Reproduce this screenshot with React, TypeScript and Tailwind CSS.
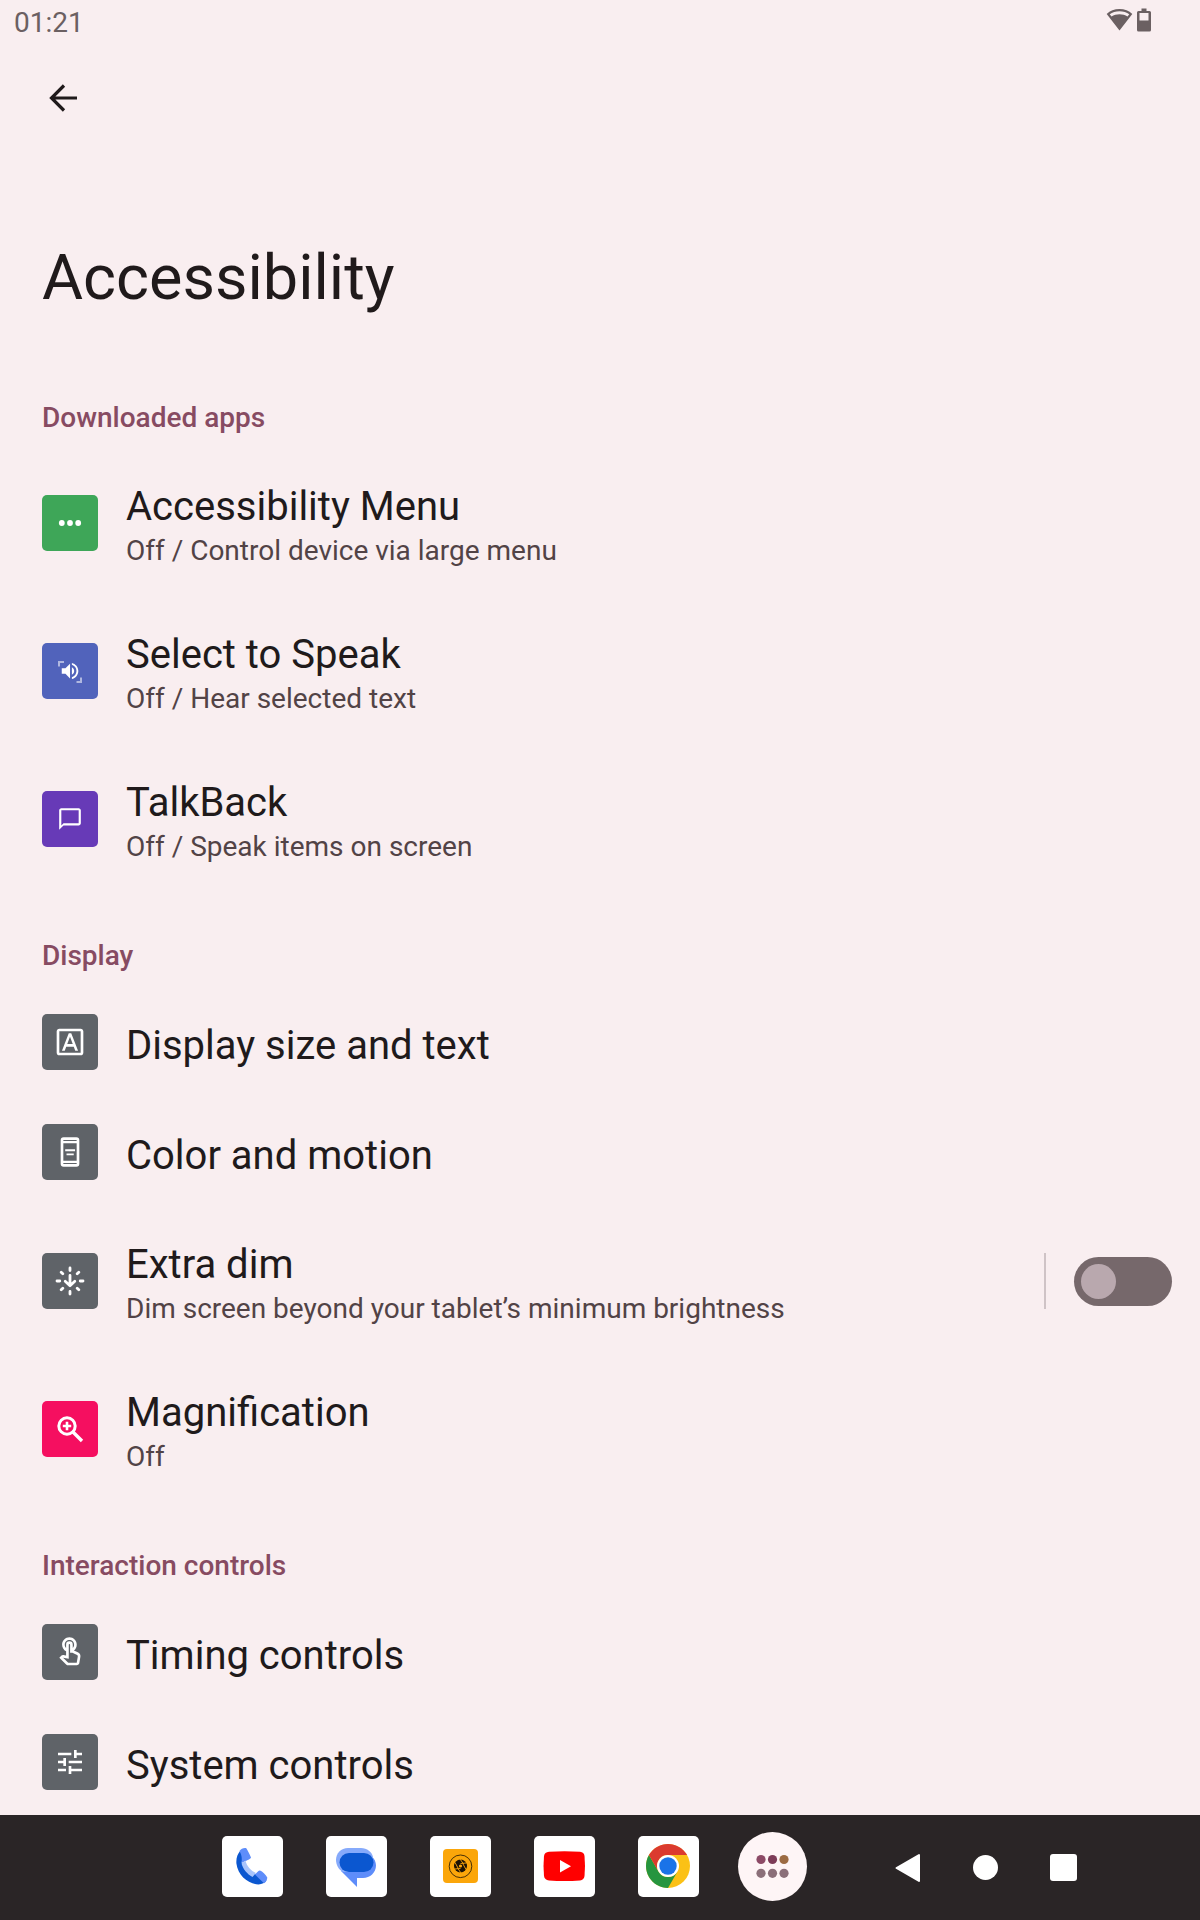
import { useState, type ReactNode } from "react";
import { MdChatBubbleOutline, MdOutlineFontDownload, MdOutlineTouchApp, MdTune } from "react-icons/md";

function DotsIcon() {
  return (
    <svg viewBox="0 0 32 32" className="size-8" fill="currentColor" aria-hidden="true">
      <circle cx="7.8" cy="16" r="2.9" />
      <circle cx="16" cy="16" r="2.9" />
      <circle cx="24.2" cy="16" r="2.9" />
    </svg>
  );
}

function SpeakIcon() {
  return (
    <svg viewBox="0 0 32 32" className="size-8" fill="currentColor" aria-hidden="true">
      <path d="M4 11.5V6h6v2H6v3.500zM28 22.5v5.500h-5.500v-2h3.500v-3.500z" opacity=".55" />
      <path
        transform="translate(5 5) scale(.92)"
        d="M3 9v6h4l5 5V4L7 9H3zm13.5 3c0-1.77-1.02-3.29-2.5-4.03v8.05c1.48-.73 2.5-2.25 2.5-4.02zM14 3.23v2.06c2.89.86 5 3.54 5 6.71s-2.11 5.85-5 6.71v2.06c4.01-.91 7-4.49 7-8.77s-2.99-7.86-7-8.77z"
      />
    </svg>
  );
}

function PhoneLinesIcon() {
  return (
    <svg viewBox="0 0 24 24" className="size-8" fill="none" stroke="currentColor" strokeWidth="2" aria-hidden="true">
      <rect x="6" y="2" width="12" height="20" rx="1.2" />
      <path d="M6 4.6h12M6 19.4h12" strokeWidth="1.8" />
      <path d="M8.4 10.7h7.400M9.4 13.8h5.400" strokeWidth="1.4" />
    </svg>
  );
}

function ExtraDimIcon() {
  return (
    <svg viewBox="0 0 32 32" className="size-8" fill="none" stroke="currentColor" strokeWidth="2.8" strokeLinecap="round" aria-hidden="true">
      <path d="M16 3v2.6M16 26.4V29M3 16h2.8M26.2 16H29M7.2 7.2l1.6 1.6M23.2 23.2l1.6 1.6M24.8 7.2l-1.6 1.6M8.8 23.2l-1.6 1.6" />
      <path d="M16 10.5v9M11.2 16.2l4.8 4.6 4.8-4.6" strokeLinejoin="round" />
    </svg>
  );
}

function MagnifyIcon() {
  return (
    <svg viewBox="0 0 32 32" className="size-8" fill="none" stroke="currentColor" strokeWidth="3" aria-hidden="true">
      <circle cx="13" cy="13" r="8.2" />
      <path d="M13 8.8v8.4M8.8 13h8.4" strokeWidth="2.6" />
      <path d="M19 19l9 9" strokeWidth="3.4" />
    </svg>
  );
}

type Item = { title: string; summary?: string; tile: string; icon: ReactNode; toggle?: boolean };

const sections: { heading: string; items: Item[] }[] = [
  {
    heading: "Downloaded apps",
    items: [
      { title: "Accessibility Menu", summary: "Off / Control device via large menu", tile: "bg-[#3ea658]", icon: <DotsIcon /> },
      { title: "Select to Speak", summary: "Off / Hear selected text", tile: "bg-[#5163bb]", icon: <SpeakIcon /> },
      { title: "TalkBack", summary: "Off / Speak items on screen", tile: "bg-[#673ab7]", icon: <MdChatBubbleOutline className="size-[26px]" /> },
    ],
  },
  {
    heading: "Display",
    items: [
      { title: "Display size and text", tile: "bg-[#5f6368]", icon: <MdOutlineFontDownload className="size-8" /> },
      { title: "Color and motion", tile: "bg-[#5f6368]", icon: <PhoneLinesIcon /> },
      { title: "Extra dim", summary: "Dim screen beyond your tablet’s minimum brightness", tile: "bg-[#5f6368]", icon: <ExtraDimIcon />, toggle: true },
      { title: "Magnification", summary: "Off", tile: "bg-[#f50f60]", icon: <MagnifyIcon /> },
    ],
  },
  {
    heading: "Interaction controls",
    items: [
      { title: "Timing controls", tile: "bg-[#5f6368]", icon: <MdOutlineTouchApp className="size-8" /> },
      { title: "System controls", tile: "bg-[#5f6368]", icon: <MdTune className="size-8" /> },
    ],
  },
];

function Toggle({ label }: { label: string }) {
  const [on, setOn] = useState(false);
  return (
    <label className="flex h-14 shrink-0 items-center border-l-2 border-[#cfc3c6] pl-7">
      <input type="checkbox" role="switch" aria-label={label} checked={on} onChange={() => setOn(!on)} className="peer sr-only" />
      <span className="flex h-[49px] w-[98px] items-center rounded-full bg-[#76686b] px-[7px] peer-checked:justify-end">
        <span className="size-[35px] rounded-full bg-[#b9a8ae]" />
      </span>
    </label>
  );
}

function Row({ item }: { item: Item }) {
  return (
    <li className="flex items-center pr-7">
      <button type="button" className={`flex flex-1 items-center gap-7 pl-[42px] text-left ${item.summary ? "h-[148px]" : "h-[110px]"}`}>
        <span className={`flex size-14 shrink-0 items-center justify-center rounded-[5px] text-white ${item.tile}`}>{item.icon}</span>
        <span className="flex flex-col pt-2">
          <span className="text-[40px] leading-[48px] text-[#201a1b]">{item.title}</span>
          {item.summary && <span className="text-[28px] leading-[40px] text-[#524346]">{item.summary}</span>}
        </span>
      </button>
      {item.toggle && <Toggle label={item.title} />}
    </li>
  );
}

function PhoneLogo() {
  return (
    <svg viewBox="0 0 61 61" className="size-full" aria-hidden="true">
      <path d="M18.5 14.5C15.500 18 14 22 14.400 27.500C16 39.500 26 48 36.500 48.500C40 48.400 43 46.500 44.500 44.500L33.500 38C27 36 22 31 19.500 26L22.500 24Z" fill="#0b57d0" />
      <path d="M17.500 15C19 12.500 22 11.700 24.300 12.200C25.500 14 27.500 18 29 21.500C28.500 23.500 24 24.500 19.500 27C20.500 21 19 18 17.500 15Z" fill="#5e8dfa" />
      <path d="M33 38.500C35 36.500 36.500 34.500 38 34.500C40.500 35.500 43.500 38.500 45.300 41.500C45.200 44 44 46 42 47.300C39 44.500 36 41.500 33 38.500Z" fill="#5e8dfa" />
      <path d="M19.500 27.500L23.500 24.500C24.500 30 29 35 34 37L30.500 41C25 38 21 33 19.500 27.500Z" fill="#a8c4fc" />
    </svg>
  );
}

function MessagesLogo() {
  return (
    <svg viewBox="0 0 61 61" className="size-full" aria-hidden="true">
      <path d="M25 17H37C44 17 50 22.500 50 29.500C50 36.500 44 42 37 42H31V51L15 35Z" fill="#5e8dfa" />
      <path d="M22 12H35C41 12 46 16 47 21C47 28 41 36 34 36H17C13 34 10 29 10 24C10 17 15 12 22 12Z" fill="#86aafb" />
      <rect x="13.500" y="17" width="34" height="19" rx="9.500" fill="#0b57d0" />
    </svg>
  );
}

function CameraLogo() {
  return (
    <svg viewBox="0 0 61 61" className="size-full" aria-hidden="true">
      <rect x="13" y="13" width="35" height="34" rx="4" fill="#fba60a" />
      <circle cx="30.500" cy="30.300" r="11.300" fill="none" stroke="#1b1205" strokeWidth=".8" />
      <circle cx="30.500" cy="30" r="6.500" fill="#1b1205" />
      <path d="M30 23l3.500 5M36.500 27l-6 .5M36 33.500l-3-5.500M31 37l-3.500-5M24.500 33l6-.5M25 26.500l3 5.500" stroke="#fba60a" strokeWidth=".9" />
      <circle cx="30.500" cy="30" r="1.600" fill="#fba60a" />
    </svg>
  );
}

function YouTubeLogo() {
  return (
    <svg viewBox="0 0 61 61" className="size-full" aria-hidden="true">
      <path d="M15 15.800Q30.500 14.600 46 15.800Q50 16.200 50.500 20Q51.500 30 50.500 40Q50 44 46 44.400Q30.500 45.600 15 44.400Q10.500 44 10 40Q9 30 10 20Q10.500 16.200 15 15.800Z" fill="#f00" />
      <path d="M26 24L37 30.300L26 36.500Z" fill="#fff" />
    </svg>
  );
}

function ChromeLogo() {
  return (
    <svg viewBox="0 0 61 61" className="size-full" aria-hidden="true">
      <circle cx="30" cy="30" r="22" fill="#fbc116" />
      <path d="M30 52A22 22 0 0 1 10.950 19L20.470 35.500A11 11 0 0 0 39.530 35.500Z" fill="#26953f" />
      <path d="M10.950 19L20.470 35.500A11 11 0 0 1 30 19H49.050A22 22 0 0 0 10.950 19Z" fill="#db3a2f" />
      <circle cx="30" cy="30" r="11" fill="#fff" />
      <circle cx="30" cy="30" r="8.700" fill="#1a73e8" />
    </svg>
  );
}

const dock = [
  { name: "Phone", logo: <PhoneLogo /> },
  { name: "Messages", logo: <MessagesLogo /> },
  { name: "Camera", logo: <CameraLogo /> },
  { name: "YouTube", logo: <YouTubeLogo /> },
  { name: "Chrome", logo: <ChromeLogo /> },
];

export default function App() {
  return (
    <div className="flex h-screen flex-col bg-[#f9eef0] font-['Roboto',sans-serif]">
      <header className="flex h-11 shrink-0 items-center justify-between pl-3.5 pr-[49px] text-[#6b6062]">
        <time className="pt-0.5 text-[28px] leading-[42px]">01:21</time>
        <div className="flex items-center gap-1 pb-1">
          <svg viewBox="0 0 27 24" className="h-6 w-[27px]" aria-label="Wi-Fi" role="img">
            <path d="M13.500 1C8.500 1 4 2.800.7 6L13.500 22.500L26.300 6C23 2.800 18.500 1 13.500 1ZM13.500 3.200C17.400 3.200 20.600 4.300 23.300 6.300L21.500 8.500C19.200 7 16.500 6.200 13.500 6.200S7.800 7 5.500 8.500L3.700 6.300C6.400 4.300 9.600 3.200 13.500 3.200Z" fill="currentColor" />
          </svg>
          <svg viewBox="0 0 14 24" className="h-6 w-3.5" aria-label="Battery" role="img">
            <path fillRule="evenodd" d="M4.500 0.500H9.500V3H12.500Q14 3 14 4.500V22Q14 23.500 12.500 23.500H1.500Q0 23.500 0 22V4.500Q0 3 1.500 3H4.500ZM2.500 5V12.500H11.500V5Z" fill="currentColor" />
          </svg>
        </div>
      </header>
      <main className="min-h-0 flex-1 overflow-y-auto [scrollbar-width:none]">
        <button type="button" aria-label="Back" className="mt-[26px] ml-[35px] flex size-14 items-center justify-center text-[#201a1b]">
          <svg viewBox="0 0 28 28" className="size-7" fill="none" stroke="currentColor" strokeWidth="3.200" aria-hidden="true">
            <path d="M28 14H2.500M15 1.500L2.500 14L15 26.500" />
          </svg>
        </button>
        <h1 className="mt-28 pb-[37px] pl-[42px] text-[63px] leading-[80px] text-[#201a1b]">Accessibility</h1>
        {sections.map((section) => (
          <section key={section.heading}>
            <h2 className="h-[94px] pt-[43px] pl-[42px] text-[28px] leading-[40px] font-medium text-[#874b62]">{section.heading}</h2>
            <ul>
              {section.items.map((item) => (
                <Row key={item.title} item={item} />
              ))}
            </ul>
          </section>
        ))}
      </main>
      <nav aria-label="Taskbar" className="flex h-[105px] shrink-0 items-center bg-[#2a2526] pr-[123px] pb-0.5 pl-[222px]">
        <div className="flex items-center gap-[43px]">
          {dock.map((app) => (
            <button key={app.name} type="button" aria-label={app.name} className="size-[61px] rounded-[5px] bg-white">
              {app.logo}
            </button>
          ))}
        </div>
        <button type="button" aria-label="All apps" className="ml-[39px] size-[69px] rounded-full bg-[#fef5f6]">
          <svg viewBox="0 0 69 69" className="size-full" aria-hidden="true">
            <circle cx="23" cy="27.500" r="4.600" fill="#8c4a66" />
            <circle cx="34.500" cy="27.500" r="4.600" fill="#7d3c58" />
            <circle cx="46" cy="27.500" r="4.600" fill="#9c6b43" />
            <circle cx="23" cy="41.300" r="4.600" fill="#8b6f79" />
            <circle cx="34.500" cy="41.300" r="4.600" fill="#8b6f79" />
            <circle cx="46" cy="41.300" r="4.600" fill="#8b6f79" />
          </svg>
        </button>
        <div className="ml-auto flex items-center gap-[51px] pt-0.5 text-white">
          <button type="button" aria-label="Back">
            <svg viewBox="0 0 27 30" className="h-[30px] w-[27px]" fill="currentColor" stroke="currentColor" strokeWidth="2" strokeLinejoin="round" aria-hidden="true">
              <path d="M2.500 15L25 2V28Z" />
            </svg>
          </button>
          <button type="button" aria-label="Home" className="flex w-[27px] justify-center">
            <span className="size-[25px] rounded-full bg-white" />
          </button>
          <button type="button" aria-label="Overview" className="size-[27px] rounded-[3px] bg-white" />
        </div>
      </nav>
    </div>
  );
}
